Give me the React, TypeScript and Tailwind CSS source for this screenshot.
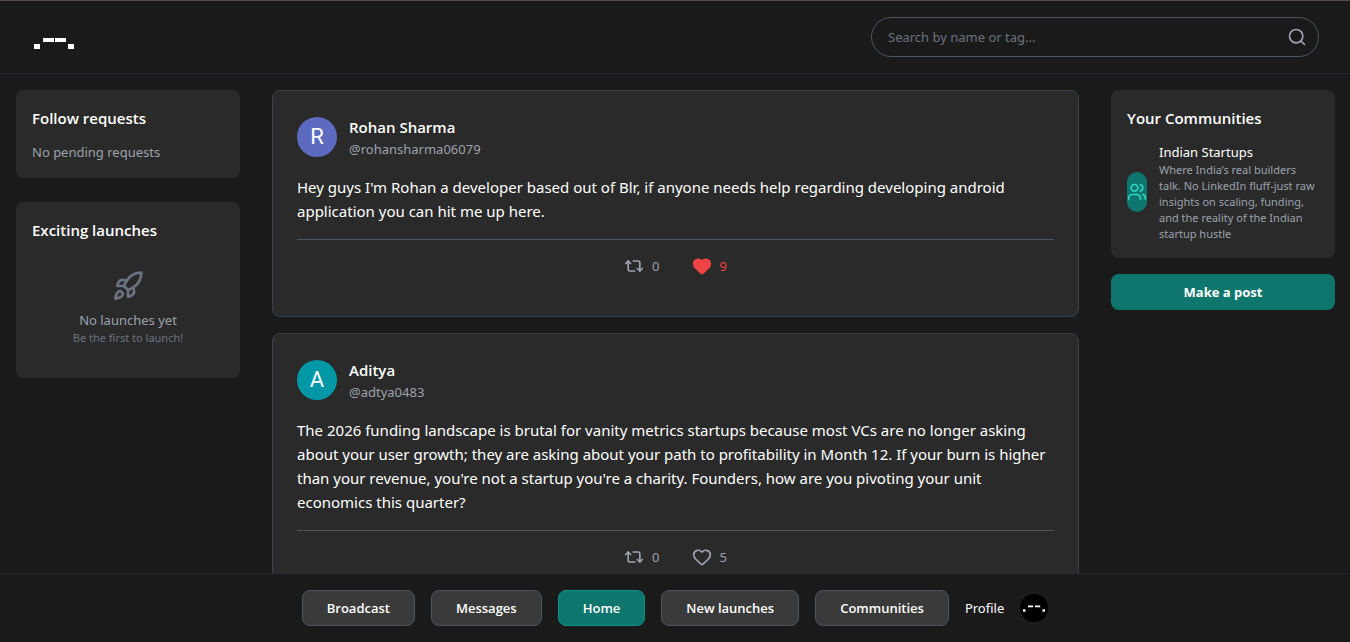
import { Heart, Repeat2, Rocket, Search, Users } from "lucide-react";

type Post = {
  name: string;
  handle: string;
  initial: string;
  avatar: string;
  text: string;
  reposts: number;
  likes: number;
  liked: boolean;
};

const posts: Post[] = [
  {
    name: "Rohan Sharma",
    handle: "@rohansharma06079",
    initial: "R",
    avatar: "bg-[#5c6bc0]",
    text: "Hey guys I'm Rohan a developer based out of Blr, if anyone needs help regarding developing android application you can hit me up here.",
    reposts: 0,
    likes: 9,
    liked: true,
  },
  {
    name: "Aditya",
    handle: "@adtya0483",
    initial: "A",
    avatar: "bg-[#0097a7]",
    text: "The 2026 funding landscape is brutal for vanity metrics startups because most VCs are no longer asking about your user growth; they are asking about your path to profitability in Month 12. If your burn is higher than your revenue, you're not a startup you're a charity. Founders, how are you pivoting your unit economics this quarter?",
    reposts: 0,
    likes: 5,
    liked: false,
  },
];

const navItems = ["Broadcast", "Messages", "Home", "New launches", "Communities"];

function PostCard({ post }: { post: Post }) {
  return (
    <article className="rounded-lg border border-[#374151] bg-[#2a2a2a] p-6">
      <div className="flex items-center gap-3">
        <div className={`flex size-10 shrink-0 items-center justify-center rounded-full font-[Roboto,sans-serif] text-[22px] leading-6 text-white ${post.avatar}`}>
          {post.initial}
        </div>
        <div>
          <h3 className="font-['Open_Sans',sans-serif] text-[15px] leading-6 font-semibold text-white">{post.name}</h3>
          <p className="text-[13px] leading-5 text-[#9ca3af]">{post.handle}</p>
        </div>
      </div>
      <p className="mt-4 text-[15px] leading-6 text-white">{post.text}</p>
      <div className="mt-4 flex justify-center gap-8 border-t border-[#4b5563] py-4 text-[13px] leading-5 text-[#9ca3af]">
        <button type="button" aria-label="Repost" className="flex items-center gap-2">
          <Repeat2 className="size-5" />
          {post.reposts}
        </button>
        <button type="button" aria-label="Like" className={`flex items-center gap-2 ${post.liked ? "text-[#ef4444]" : ""}`}>
          <Heart className="size-5" fill={post.liked ? "currentColor" : "none"} />
          {post.likes}
        </button>
      </div>
    </article>
  );
}

export default function App() {
  return (
    <div className="flex h-screen flex-col border-t border-[#574a4e] bg-[#1a1a1a] font-['Noto_Sans','Open_Sans',sans-serif] text-white">
      <header className="flex shrink-0 items-center justify-between border-b border-[#1f2937] py-4 pr-[31px] pl-8">
        <a href="#" aria-label="Home page">
          <svg viewBox="0 0 44 24" className="h-6 w-11" fill="#fff">
            <path d="M2 19h6v5H2zM11 13h11v4H11zM23 13h11v4H23zM36 19h6v5h-6z" />
          </svg>
        </a>
        <form className="flex h-10 w-md items-center rounded-full border border-[#4b5563] pr-[11px] pl-4">
          <input
            type="text"
            aria-label="Search by name or tag"
            placeholder="Search by name or tag..."
            className="min-w-0 flex-1 bg-transparent text-[13px] leading-5 outline-none placeholder:text-[#6b7280]"
          />
          <button type="submit" aria-label="Search" className="text-[#9ca3af]">
            <Search className="size-5" />
          </button>
        </form>
      </header>

      <div className="flex min-h-0 flex-1 gap-8 overflow-hidden pt-4 pr-[15px] pl-4">
        <aside className="flex w-56 shrink-0 flex-col gap-6">
          <section className="rounded-lg bg-[#2a2a2a] p-4">
            <h2 className="font-['Open_Sans',sans-serif] text-[15px] leading-6 font-semibold">Follow requests</h2>
            <p className="mt-3 text-[13px] leading-5 text-[#9ca3af]">No pending requests</p>
          </section>
          <section className="rounded-lg bg-[#2a2a2a] p-4">
            <h2 className="font-['Open_Sans',sans-serif] text-[15px] leading-6 font-semibold">Exciting launches</h2>
            <div className="mt-3 flex flex-col items-center py-4">
              <Rocket className="mb-2 size-8 text-[#6b7280]" />
              <p className="text-[13px] leading-5 text-[#9ca3af]">No launches yet</p>
              <p className="text-[11px] leading-4 text-[#6b7280]">Be the first to launch!</p>
            </div>
          </section>
        </aside>

        <main className="flex min-w-0 flex-1 flex-col gap-4">
          {posts.map((post) => (
            <PostCard key={post.handle} post={post} />
          ))}
        </main>

        <aside className="flex w-56 shrink-0 flex-col gap-4">
          <section className="rounded-lg bg-[#2a2a2a] p-4">
            <h2 className="font-['Open_Sans',sans-serif] text-[15px] leading-6 font-semibold">Your Communities</h2>
            <div className="mt-3 flex items-center gap-3">
              <div className="flex h-10 w-5 shrink-0 items-center justify-center rounded-full bg-[#0f766e]">
                <Users className="size-5 text-[#2dd4bf]" />
              </div>
              <div>
                <p className="text-[13px] leading-5">Indian Startups</p>
                <p className="text-[11px] leading-4 text-[#9ca3af]">
                  Where India’s real builders talk. No LinkedIn fluff-just raw insights on scaling, funding, and the reality of the Indian startup hustle
                </p>
              </div>
            </div>
          </section>
          <button type="button" className="h-9 rounded-lg bg-[#0f766e] font-['Open_Sans',sans-serif] text-[13px] leading-5 font-bold">
            Make a post
          </button>
        </aside>
      </div>

      <nav className="flex shrink-0 items-center justify-center gap-4 border-t border-[#1f2937] bg-[#1a1a1a] py-4">
        {navItems.map((item) => (
          <button
            key={item}
            type="button"
            className={`h-9 rounded-lg border px-6 font-['Open_Sans',sans-serif] text-[13px] leading-5 font-semibold ${item === "Home" ? "border-[#0d9488] bg-[#0f766e]" : "border-[#4b5563] bg-[#3a3a3a]"}`}
          >
            {item}
          </button>
        ))}
        <a href="#" className="flex items-center gap-4 text-[13px] leading-5">
          Profile
          <svg viewBox="0 0 28 28" className="size-7" aria-hidden="true">
            <circle cx="14" cy="14" r="14" fill="#000" />
            <path d="M3 15.300h2.500v2.500H3zM8 11.500h5.200v1.700H8zM15 11.500h5.200v1.700H15zM22.500 15.300H25v2.500h-2.500z" fill="#fff" />
          </svg>
        </a>
      </nav>
    </div>
  );
}
